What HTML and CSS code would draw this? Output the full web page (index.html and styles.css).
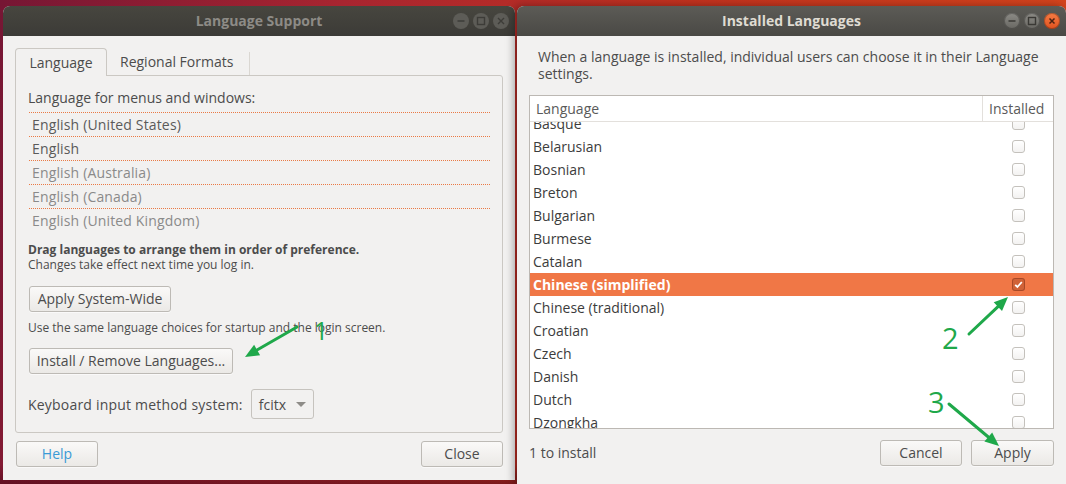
FILE: index.html
```html
<!DOCTYPE html>
<html>
<head>
<meta charset="utf-8">
<title>Language Support</title>
<link rel="stylesheet" href="styles.css">
</head>
<body>
<div class="desktop">

  <div class="win win-left">
    <div class="titlebar inactive">
      <span class="title">Language Support</span>
      <div class="controls">
        <span class="ctl"><svg viewBox="0 0 16 16" width="16" height="16"><path d="M4.5 8h7" /></svg></span>
        <span class="ctl"><svg viewBox="0 0 16 16" width="16" height="16"><rect x="4.5" y="4.5" width="7" height="7" /></svg></span>
        <span class="ctl"><svg viewBox="0 0 16 16" width="16" height="16"><path d="M5 5l6 6M11 5l-6 6" /></svg></span>
      </div>
    </div>
    <div class="left-body">
      <div class="tabs">
        <div class="tab tab-active">Language</div>
        <div class="tab tab-inactive">Regional Formats</div>
      </div>
      <div class="frame">
        <div class="label">Language for menus and windows:</div>
        <ul class="langlist">
          <li class="strong">English (United States)</li>
          <li class="strong">English</li>
          <li>English (Australia)</li>
          <li>English (Canada)</li>
          <li>English (United Kingdom)</li>
        </ul>
        <p class="hint"><b>Drag languages to arrange them in order of preference.</b><br>Changes take effect next time you log in.</p>
        <button class="btn btn-sys">Apply System-Wide</button>
        <p class="hint hint-sys">Use the same language choices for startup and the login screen.</p>
        <button class="btn btn-install">Install / Remove Languages...</button>
        <div class="kbd-row">
          <span>Keyboard input method system:</span>
          <div class="combo">fcitx<span class="caret"></span></div>
        </div>
      </div>
      <div class="actions">
        <button class="btn btn-dialog btn-help">Help</button>
        <button class="btn btn-dialog">Close</button>
      </div>
    </div>
  </div>

  <div class="win win-right">
    <div class="titlebar active">
      <span class="title">Installed Languages</span>
      <div class="controls">
        <span class="ctl"><svg viewBox="0 0 16 16" width="16" height="16"><path d="M4.5 8h7" /></svg></span>
        <span class="ctl"><svg viewBox="0 0 16 16" width="16" height="16"><rect x="4.5" y="4.5" width="7" height="7" /></svg></span>
        <span class="ctl ctl-close"><svg viewBox="0 0 16 16" width="16" height="16"><path d="M5.5 5.5l5 5M10.5 5.5l-5 5" /></svg></span>
      </div>
    </div>
    <div class="right-body">
      <p class="intro">When a language is installed, individual users can choose it in their Language<br>settings.</p>
      <div class="tree">
        <div class="tree-head">
          <div class="col-lang">Language</div>
          <div class="col-inst">Installed</div>
        </div>
        <div class="tree-view">
          <div class="tree-rows">
            <div class="row"><span class="name">Basque</span><span class="cell"><span class="check"></span></span></div>
            <div class="row"><span class="name">Belarusian</span><span class="cell"><span class="check"></span></span></div>
            <div class="row"><span class="name">Bosnian</span><span class="cell"><span class="check"></span></span></div>
            <div class="row"><span class="name">Breton</span><span class="cell"><span class="check"></span></span></div>
            <div class="row"><span class="name">Bulgarian</span><span class="cell"><span class="check"></span></span></div>
            <div class="row"><span class="name">Burmese</span><span class="cell"><span class="check"></span></span></div>
            <div class="row"><span class="name">Catalan</span><span class="cell"><span class="check"></span></span></div>
            <div class="row row-selected"><span class="name">Chinese (simplified)</span><span class="cell"><span class="check checked"><svg viewBox="0 0 13 13" width="13" height="13"><path d="M3.2 6.8l2.2 2.2 4.4-5" /></svg></span></span></div>
            <div class="row"><span class="name">Chinese (traditional)</span><span class="cell"><span class="check"></span></span></div>
            <div class="row"><span class="name">Croatian</span><span class="cell"><span class="check"></span></span></div>
            <div class="row"><span class="name">Czech</span><span class="cell"><span class="check"></span></span></div>
            <div class="row"><span class="name">Danish</span><span class="cell"><span class="check"></span></span></div>
            <div class="row"><span class="name">Dutch</span><span class="cell"><span class="check"></span></span></div>
            <div class="row"><span class="name">Dzongkha</span><span class="cell"><span class="check"></span></span></div>
          </div>
        </div>
      </div>
      <div class="right-actions">
        <span class="status">1 to install</span>
        <button class="btn btn-cancel">Cancel</button>
        <button class="btn btn-apply">Apply</button>
      </div>
    </div>
  </div>

  <svg class="annot" viewBox="0 0 1066 484" width="1066" height="484">
    <g class="arrow">
      <line x1="297" y1="327" x2="257" y2="350" />
      <polygon points="245,357 254.1,344.8 260.1,355.2" />
      <line x1="969" y1="334" x2="998" y2="306.6" />
      <polygon points="1008,297 1002,311 993.7,302.3" />
      <line x1="949" y1="404" x2="988.3" y2="437" />
      <polygon points="999,446 984.4,441.6 992.2,432.4" />
    </g>
    <text class="num" x="314" y="340" font-size="25">1</text>
    <text class="num" x="942" y="349" font-size="29">2</text>
    <text class="num" x="928" y="413" font-size="29">3</text>
  </svg>
</div>
</body>
</html>
```

FILE: styles.css
```css
* { box-sizing: border-box; }

html, body {
  margin: 0;
  padding: 0;
}

body {
  width: 1066px;
  height: 484px;
  overflow: hidden;
  font-family: "Open Sans", "Noto Sans", sans-serif;
  font-size: 14px;
  color: #4c4c4c;
  background: linear-gradient(100deg, #761634 0%, #a82530 30%, #c2321f 60%, #d9481d 100%);
}

.desktop {
  position: relative;
  width: 1066px;
  height: 484px;
  background:
    linear-gradient(180deg, rgba(0,0,0,0) 0%, rgba(0,0,0,0) 96%, rgba(70,8,20,0.55) 100%);
}

/* ---------- windows ---------- */
.win {
  position: absolute;
  top: 6px;
  background: #f2f1f0;
  border-radius: 7px 7px 0 0;
  overflow: hidden;
  display: flex;
  flex-direction: column;
}

.win-left {
  left: 3px;
  width: 512px;
  height: 474px;
}

.win-right {
  left: 517px;
  width: 549px;
  height: 478px;
  box-shadow: -3px 0 8px rgba(0,0,0,0.35);
}

.titlebar {
  position: relative;
  height: 30px;
  flex: none;
  display: flex;
  align-items: center;
  justify-content: center;
  font-weight: 700;
  font-size: 14px;
}

.titlebar.inactive {
  background: linear-gradient(#47463f, #3c3b37);
  color: #8d8b86;
}

.titlebar.active {
  background: linear-gradient(#5c5b56, #4a4945);
  color: #dfdbd2;
}

.title { line-height: 30px; }

.controls {
  position: absolute;
  right: 6px;
  top: 7px;
  display: flex;
  gap: 4px;
}

.ctl {
  width: 16px;
  height: 16px;
  border-radius: 50%;
  display: block;
}

.ctl svg {
  display: block;
  fill: none;
  stroke-width: 1.4;
}

.inactive .ctl {
  background: #5d5c57;
}
.inactive .ctl svg { stroke: #3d3c38; }

.active .ctl {
  background: linear-gradient(#8c8b86, #686762);
  box-shadow: inset 0 0 0 1px rgba(0,0,0,0.25);
}
.active .ctl svg { stroke: #3a3935; }

.active .ctl-close {
  background: linear-gradient(#f77c44, #e0521f);
}
.active .ctl-close svg { stroke: #4a2213; stroke-width: 1.5; }

/* ---------- left window ---------- */
.left-body {
  padding: 12px 12px 0 12px;
  display: flex;
  flex-direction: column;
}

.tabs {
  display: flex;
  height: 27px;
  position: relative;
  z-index: 1;
}

.tab {
  height: 28px;
  line-height: 27px;
}

.tab-active {
  width: 92px;
  text-align: center;
  border: 1px solid #cbc8c3;
  border-bottom: none;
  border-radius: 4px 4px 0 0;
  background: #f2f1f0;
}

.tab-inactive {
  position: relative;
  padding: 0 13px 0 13px;
  width: 143px;
}

.tab-inactive::after {
  content: "";
  position: absolute;
  right: 0;
  top: 4px;
  bottom: 1px;
  width: 1px;
  background: #dad7d2;
}

.frame {
  height: 358px;
  border: 1px solid #cbc8c3;
  border-radius: 0 3px 3px 3px;
  padding: 13px 12px 0 12px;
  display: flex;
  flex-direction: column;
  align-items: flex-start;
}

.label {
  line-height: 17px;
}

.langlist {
  list-style: none;
  margin: 6px 0 0 1px;
  padding: 0;
  width: 461px;
}

.langlist li {
  height: 24px;
  line-height: 23px;
  padding-left: 3px;
  border-top: 1px dotted #ea7a45;
  color: #8a8a8a;
  letter-spacing: 0.15px;
}

.langlist li.strong { color: #5a5a5a; }

.hint {
  margin: 10px 0 0 0;
  font-size: 12px;
  line-height: 15px;
}

.hint b { font-weight: 700; }

.hint-sys { margin-top: 8px; }

.btn {
  font-family: inherit;
  font-size: 14px;
  color: #4c4c4c;
  height: 26px;
  padding: 0 6px;
  border: 1px solid #bdbab5;
  border-radius: 3px;
  background: linear-gradient(#faf9f8, #ebe9e6);
  box-shadow: 0 1px 0 rgba(255,255,255,0.6);
  line-height: 24px;
  margin: 0;
}

.btn-sys {
  margin: 14px 0 0 1px;
  width: 142px;
}

.btn-install {
  margin: 13px 0 0 1px;
  width: 204px;
}

.kbd-row {
  margin-top: 15px;
  display: flex;
  align-items: center;
  gap: 8px;
  letter-spacing: 0.2px;
}

.combo {
  width: 63px;
  height: 30px;
  border: 1px solid #c6c3be;
  border-radius: 3px;
  background: #f2f1f0;
  display: flex;
  align-items: center;
  padding-left: 7px;
  gap: 10px;
  letter-spacing: 0;
}

.caret {
  width: 0;
  height: 0;
  border-left: 5px solid transparent;
  border-right: 5px solid transparent;
  border-top: 5px solid #8e8c88;
  margin-top: 1px;
}

.actions {
  display: flex;
  justify-content: space-between;
  margin-top: 8px;
  padding: 0 0 0 1px;
}

.btn-dialog { width: 82px; }

.btn-help { color: #3a9ad6; }

/* ---------- right window ---------- */
.right-body {
  padding: 0 12px;
  display: flex;
  flex-direction: column;
}

.intro {
  margin: 12px 0 0 9px;
  line-height: 17px;
  white-space: nowrap;
}

.tree {
  margin-top: 13px;
  width: 525px;
  height: 334px;
  border: 1px solid #bcb8b3;
  background: #ffffff;
  display: flex;
  flex-direction: column;
  overflow: hidden;
}

.tree-head {
  height: 26px;
  flex: none;
  display: flex;
  border-bottom: 1px solid #e3e0dc;
  color: #5a5a5a;
  line-height: 25px;
}

.col-lang {
  flex: 1;
  padding-left: 6px;
  border-right: 1px solid #e3e0dc;
}

.col-inst {
  width: 70px;
  padding-left: 6px;
}

.tree-view {
  flex: 1;
  overflow: hidden;
}

.tree-rows {
  margin-top: -10px;
}

.row {
  height: 23px;
  display: flex;
  align-items: center;
  color: #3c3c3c;
}

.row .name {
  flex: 1;
  padding-left: 3px;
}

.row .cell {
  width: 70px;
  display: flex;
  justify-content: center;
  padding-left: 1px;
}

.check {
  width: 13px;
  height: 13px;
  border: 1px solid #c4c1bc;
  border-radius: 3px;
  background: linear-gradient(#ffffff, #f3f2f1);
  display: block;
}

.row-selected {
  background: #f07746;
  color: #ffffff;
  font-weight: 700;
}

.check.checked {
  background: rgba(150, 60, 30, 0.35);
  border-color: rgba(120, 45, 20, 0.45);
  position: relative;
}

.check.checked svg {
  position: absolute;
  left: -1px;
  top: -1px;
  fill: none;
  stroke: #ffffff;
  stroke-width: 1.8;
}

.right-actions {
  margin-top: 11px;
  display: flex;
  align-items: center;
}

.status {
  flex: 1;
  line-height: 26px;
}

.btn-cancel { width: 82px; }
.btn-apply { width: 83px; margin-left: 9px; }

/* ---------- annotations ---------- */
.annot {
  position: absolute;
  left: 0;
  top: 0;
  pointer-events: none;
}

.arrow line {
  stroke: #1fa84a;
  stroke-width: 3;
  stroke-linecap: round;
}

.arrow polygon {
  fill: #1fa84a;
}

.num {
  fill: #1fa84a;
  font-family: "Open Sans", "Noto Sans", sans-serif;
  font-weight: 400;
}
```
